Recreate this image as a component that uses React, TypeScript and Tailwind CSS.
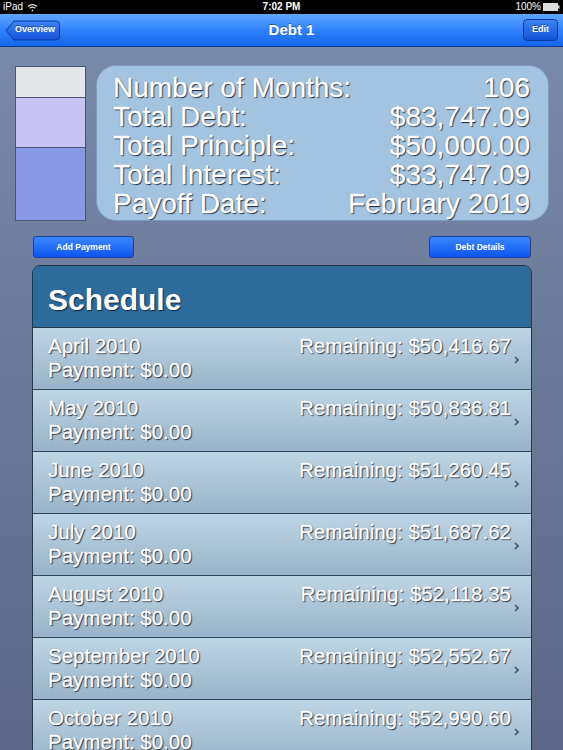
import React from "react";

const rows = [
  { month: "April 2010", remaining: "$50,416.67" },
  { month: "May 2010", remaining: "$50,836.81" },
  { month: "June 2010", remaining: "$51,260.45" },
  { month: "July 2010", remaining: "$51,687.62" },
  { month: "August 2010", remaining: "$52,118.35" },
  { month: "September 2010", remaining: "$52,552.67" },
  { month: "October 2010", remaining: "$52,990.60" },
  { month: "November 2010", remaining: "$53,432.19" },
];

const stats = [
  ["Number of Months:", "106"],
  ["Total Debt:", "$83,747.09"],
  ["Total Principle:", "$50,000.00"],
  ["Total Interest:", "$33,747.09"],
  ["Payoff Date:", "February 2019"],
];

const StatusBar: React.FC = () => (
  <div className="h-[14px] bg-black text-white flex items-center justify-between px-[3px] text-[10px] leading-none">
    <div className="flex items-center gap-[4px] w-[80px]">
      <span>iPad</span>
      <svg width="11" height="9" viewBox="0 0 11 9" fill="none" stroke="#ddd" strokeWidth="1.3">
        <path d="M1 3.5a6.5 6.5 0 0 1 9 0" />
        <path d="M2.8 5.3a4 4 0 0 1 5.4 0" />
        <circle cx="5.5" cy="7.4" r="0.9" fill="#ddd" stroke="none" />
      </svg>
    </div>
    <span className="font-bold text-[10px]">7:02 PM</span>
    <div className="flex items-center justify-end gap-[2px] w-[80px]">
      <span>100%</span>
      <svg width="17" height="8" viewBox="0 0 17 8">
        <rect x="0.5" y="0.5" width="14" height="7" fill="#ddd" stroke="#ddd" />
        <rect x="15" y="2.5" width="1.5" height="3" fill="#ddd" />
      </svg>
    </div>
  </div>
);

const NavBar: React.FC = () => (
  <div className="h-[33px] bg-gradient-to-b from-[#5ea6ff] via-[#2f82fb] to-[#1566ea] border-b border-[#0b3f95] flex items-center justify-between px-[5px]">
    <div className="relative h-[21px] w-[55px] flex items-center justify-center pl-[5px]">
      <svg className="absolute inset-0" width="55" height="21" viewBox="0 0 55 21">
        <defs>
          <linearGradient id="bk" x1="0" y1="0" x2="0" y2="1">
            <stop offset="0" stopColor="#3b84f5" />
            <stop offset="1" stopColor="#1552d8" />
          </linearGradient>
        </defs>
        <path d="M1 10.5 L9 1 H51 a3.5 3.5 0 0 1 3.5 3.5 V16.5 a3.5 3.5 0 0 1 -3.5 3.5 H9 Z" fill="url(#bk)" stroke="#0c3a9a" strokeWidth="1" />
      </svg>
      <span className="relative text-white font-bold text-[9px] [text-shadow:0_-1px_0_rgba(0,0,0,0.4)]">Overview</span>
    </div>
    <span className="text-white font-bold text-[15px] [text-shadow:0_-1px_0_rgba(0,0,0,0.35)]">Debt 1</span>
    <div className="h-[22px] w-[35px] rounded-[4px] border border-[#0c3a9a] bg-gradient-to-b from-[#3b84f5] to-[#1552d8] flex items-center justify-center">
      <span className="text-white font-bold text-[9px] [text-shadow:0_-1px_0_rgba(0,0,0,0.4)]">Edit</span>
    </div>
  </div>
);

const BlueButton: React.FC<{ label: string; width: string }> = ({ label, width }) => (
  <div className={`${width} h-[22px] rounded-[3px] border border-[#1d3f9a] bg-gradient-to-b from-[#3a86ff] to-[#0f55f0] flex items-center justify-center`}>
    <span className="text-white font-bold text-[8.5px]">{label}</span>
  </div>
);

// white lettering with a dark drop shadow, like the original embossed labels
const emboss =
  "[text-shadow:1px_1px_1px_rgba(20,30,50,0.95),0_0_1px_rgba(20,30,50,0.6)] [-webkit-text-stroke:0.35px_white]";

export default function App() {
  return (
    <div
      className="w-[563px] h-[750px] overflow-hidden bg-gradient-to-b from-[#7b8bab] to-[#5c6787]"
      style={{ fontFamily: '"Liberation Sans", Arial, sans-serif' }}
    >
      <StatusBar />
      <NavBar />

      <div className="flex items-start pl-[15px] pt-[19px] pr-[14px]">
        <div className="w-[71px] h-[155px] flex flex-col border border-[#4a5578]">
          <div className="h-[31px] bg-[#e3e6e8] border-b border-[#4a5578]" />
          <div className="h-[50px] bg-[#c7c3f4] border-b border-[#4a5578]" />
          <div className="flex-1 bg-[#8898e4]" />
        </div>
        <div className="ml-[10px] flex-1 h-[156px] -mt-[1px] rounded-[20px] bg-[#a3c4e1] border border-[#7a9cc0] pl-[16px] pr-[18px] pt-[7px] text-white text-[28px] leading-[29px]">
          {stats.map(([label, value]) => (
            <div key={label} className={`flex justify-between ${emboss}`}>
              <span>{label}</span>
              <span>{value}</span>
            </div>
          ))}
        </div>
      </div>

      <div className="flex justify-between pl-[33px] pr-[32px] mt-[15px]">
        <BlueButton label="Add Payment" width="w-[101px]" />
        <BlueButton label="Debt Details" width="w-[102px]" />
      </div>

      <div className="mx-[32px] w-[500px] mt-[7px] rounded-t-[8px] border border-[#24364a] overflow-hidden">
        <div className="h-[62px] bg-[#2d6b9b] border-b border-[#24364a] flex items-center pl-[15px] pt-[6px]">
          <span className="text-white font-bold text-[30px] [text-shadow:1px_1px_1px_rgba(20,30,50,0.9)]">Schedule</span>
        </div>
        {rows.map((r) => (
          <div
            key={r.month}
            className="h-[62px] bg-gradient-to-b from-[#bed5e5] to-[#98b3c8] border-b border-[#33475c] flex items-center pl-[15px] pr-[12px]"
          >
            <div className={`flex-1 text-white text-[20.5px] leading-[24px] -mt-[1px] ${emboss}`}>
              <div className="flex justify-between">
                <span>{r.month}</span>
                <span>Remaining: {r.remaining}</span>
              </div>
              <div>Payment: $0.00</div>
            </div>
            <svg className="ml-[3px] mt-[2px]" width="5" height="8" viewBox="0 0 5 8" fill="none" stroke="#4b5563" strokeWidth="1.6">
              <path d="M1 1 L4 4 L1 7" />
            </svg>
          </div>
        ))}
      </div>
    </div>
  );
}
